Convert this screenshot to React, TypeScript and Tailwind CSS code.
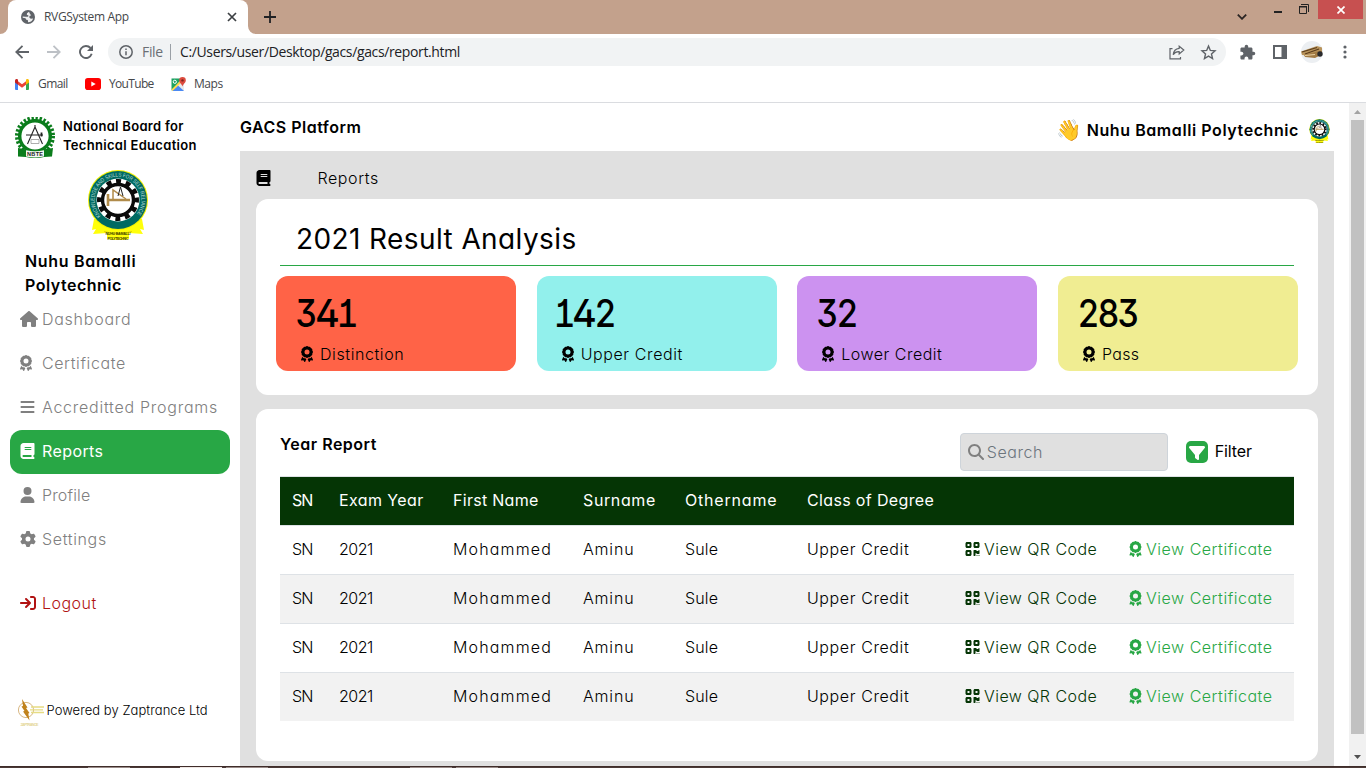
import type { ReactNode } from "react";
import {
  FaArrowRightToBracket,
  FaAward,
  FaBars,
  FaBook,
  FaFilter,
  FaGear,
  FaHouse,
  FaMagnifyingGlass,
  FaQrcode,
  FaUser,
} from "react-icons/fa6";
import { MdExtension } from "react-icons/md";

function TabIcon() {
  return (
    <svg viewBox="0 0 14 14" className="size-3.5">
      <circle cx="7" cy="7" r="7" fill="#5f6368" />
      <path d="M8 1.7 6 3.2l-.2 1.500 1.700.8-.4 1.300H4.300L1.700 6.500v1.300l2.800.500.8 1.500 1.500.3.3 2.100c2.500 0 4.500-1.500 5-3.700l-2.300.300-1.500-1.200.2-1.600 1.700-.8L9 4z" fill="#fff" opacity=".9" />
    </svg>
  );
}

function BrowserTabs() {
  return (
    <div className="flex h-[34px] shrink-0 bg-[#c3a18c] pl-2">
      <div className="relative flex w-60 items-center rounded-t-lg bg-white pl-[13px] pr-2.5">
        <svg viewBox="0 0 8 8" className="absolute -left-2 bottom-0 size-2"><path d="M8 0v8H0a8 8 0 0 0 8-8" fill="#fff" /></svg>
        <svg viewBox="0 0 8 8" className="absolute -right-2 bottom-0 size-2"><path d="M0 0v8h8a8 8 0 0 1-8-8" fill="#fff" /></svg>
        <TabIcon />
        <span className="ml-[9px] grow text-xs tracking-[-0.33px] text-[#45474a]">RVGSystem App</span>
        <svg viewBox="0 0 12 12" className="size-3" stroke="#3c4043" strokeWidth="1.7"><path d="m2 2 8 8M10 2l-8 8" /></svg>
      </div>
      <svg viewBox="0 0 12 12" className="ml-4 mt-[11px] size-3" stroke="#202124" strokeWidth="1.8"><path d="M6 0v12M0 6h12" /></svg>
      <svg viewBox="0 0 10 6" className="ml-auto mr-[23px] mt-3.5 h-1.5 w-2.5" fill="none" stroke="#2b2523" strokeWidth="1.8"><path d="m.8.600 4.200 4.200L9.200.600" /></svg>
      <div className="ml-1 mr-[17px] mt-[11px] h-0.5 w-2 bg-[#222]" />
      <svg viewBox="0 0 10 10" className="mr-[9px] mt-1 size-2.5" fill="none" stroke="#222"><path d="M.5 3h7v6.500h-7zM0 2.500h8M2 .500h7.500V8" /></svg>
      <div className="flex h-[19px] w-[45px] items-center justify-center bg-[#c75050]">
        <svg viewBox="0 0 8 8" className="size-2" stroke="#fff" strokeWidth="1.7"><path d="m.5.500 7 7M7.500.500l-7 7" /></svg>
      </div>
      <div className="w-[3px]" />
    </div>
  );
}

function Toolbar() {
  return (
    <div className="flex h-9 shrink-0 items-center bg-white pl-[15px] pr-[19px]">
      <svg viewBox="0 0 14 14" className="h-3.5 w-3.5" fill="none" stroke="#5f6368" strokeWidth="1.8"><path d="M14 7H1.500M7.500.800 1.300 7l6.200 6.200" /></svg>
      <svg viewBox="0 0 14 14" className="ml-[18px] h-3.5 w-3.5" fill="none" stroke="#bdc1c6" strokeWidth="1.8"><path d="M0 7h12.500M6.500.800 12.700 7l-6.200 6.200" /></svg>
      <svg viewBox="0 0 14 14" className="ml-[18px] h-3.5 w-3.5" fill="none" stroke="#5f6368" strokeWidth="1.9"><path d="M12.700 8.800A6 6 0 1 1 11.500 3" /><path d="M14 0v6H8z" fill="#5f6368" stroke="none" /></svg>
      <div className="ml-[15px] flex h-7 w-[1118px] items-center rounded-full bg-[#f1f3f4] pl-[11px] pr-[9px] text-sm">
        <svg viewBox="0 0 14 14" className="size-3.5" fill="none" stroke="#5f6368" strokeWidth="1.5"><circle cx="7" cy="7" r="6.200" /><path d="M7 6.200v4M7 3.400v1.600" /></svg>
        <span className="ml-[9px] w-[28px] tracking-[-0.33px] text-[#6b6f74]">File</span>
        <div className="mr-[9px] h-4 w-px bg-[#9aa0a6]" />
        <span className="grow tracking-[-0.37px] text-[#202124]">C:/Users/user/Desktop/gacs/gacs/report.html</span>
        <svg viewBox="0 0 16 15" className="mr-[15px] h-[15px] w-4" fill="none" stroke="#5f6368" strokeWidth="1.2"><path d="M3.500 3.600H1v10.300h10.500v-2" /><path d="M10.200 1.200 14.800 5l-4.600 3.900V6.700C7.300 6.500 5.500 7.700 4.200 9.800 4.500 6.300 6.500 3.700 10.200 3.300z" /></svg>
        <svg viewBox="0 0 24 24" className="size-[17px]" fill="none" stroke="#5f6368" strokeWidth="2"><path d="m12 3 2.600 6.100 6.600.600-5 4.400 1.500 6.500L12 17.200l-5.700 3.400 1.500-6.500-5-4.400 6.600-.600z" /></svg>
      </div>
      <MdExtension className="ml-[13px] size-[17px] text-[#5f6368]" />
      <svg viewBox="0 0 14 14" className="ml-[17px] size-3.5"><path d="M0 0h14v14H0z" fill="#5f6368" /><path d="M2 2h6.500v10H2z" fill="#fff" /></svg>
      <svg viewBox="0 0 22 22" className="ml-3.5 size-[22px]">
        <circle cx="11" cy="11" r="11" fill="#eceff2" />
        <path d="m0 10.500 16-5.500 5 1.500v3L7 14.500l-6-.500z" fill="#b8935a" /><path d="m1 11 15-4.500M4 13l14-5" stroke="#5a3c1c" strokeWidth="1.200" />
        <path d="m3 14 13-3.500 5-1v4L14 17l-10-1z" fill="#a27b44" /><path d="m4 14.500 10-1" stroke="#ead2a4" /><circle cx="19" cy="13" r="2.700" fill="#2a2a2c" />
      </svg>
      <svg viewBox="0 0 4 14" className="ml-auto h-3.5 w-1" fill="#5f6368"><circle cx="2" cy="2" r="1.600" /><circle cx="2" cy="7" r="1.600" /><circle cx="2" cy="12" r="1.600" /></svg>
    </div>
  );
}

function Bookmarks() {
  return (
    <div className="flex h-[33px] shrink-0 items-center border-b border-[#dadce0] bg-white pb-1 pl-[15px] text-xs text-[#45474a]">
      <svg viewBox="0 0 14 11" className="h-[11px] w-3.5">
        <path d="M0 1.500V10q0 1 1 1h2V4z" fill="#4285f4" /><path d="M14 1.500V10q0 1-1 1h-2V4z" fill="#34a853" />
        <path d="m3 2.200 4 3 4-3v3.600L7 8.800 3 5.800z" fill="#ea4335" /><path d="M0 1.800C0 0 1.800-.400 3 .600v5.200L0 3.500z" fill="#c5221f" /><path d="M14 1.800C14 0 12.200-.400 11 .600v5.200l3-2.300z" fill="#fbbc04" />
      </svg>
      <span className="ml-[9px] w-[47px] tracking-[-0.57px]">Gmail</span>
      <svg viewBox="0 0 16 12" className="h-3 w-4"><rect width="16" height="12" rx="2.800" fill="#f00" /><path d="m6.300 3.400 4.400 2.600-4.400 2.600z" fill="#fff" /></svg>
      <span className="ml-2 w-[62px] tracking-[-0.67px]">YouTube</span>
      <svg viewBox="0 0 15 15" className="h-[15px] w-[15px]">
        <path d="M1 1.500h12V14H1z" fill="#e8eaed" /><path d="M.500 1.500H11L2 12.500l-1.500 1z" fill="#1ea362" /><path d="m7 8.500 6 5.500H1z" fill="#4a89f3" /><path d="m.500 12.500 9-9 1.500 1.500-9.500 9z" fill="#ffd84c" />
        <circle cx="3.800" cy="4.800" r="1.600" fill="none" stroke="#fff" /><path d="M11.500 0a3.300 3.300 0 0 1 3.300 3.400c0 2.300-2.500 3.200-3.300 6.100-.800-2.900-3.300-3.800-3.300-6.100A3.300 3.300 0 0 1 11.500 0" fill="#dc4b3e" /><circle cx="11.500" cy="3.400" r="1.200" fill="#7e251c" />
      </svg>
      <span className="ml-2 tracking-[-0.44px]">Maps</span>
    </div>
  );
}

function Crest({ className }: { className: string }) {
  return (
    <svg viewBox="0 0 60 70" className={className}>
      <path d="M6 49 4 60l4-1-3 5 14-1v6q11 2.500 22 0v-6l14 1-3-5 4 1-2-11z" fill="#ffff0a" />
      <path d="M16 61.500q14 4 28 0" fill="none" stroke="#e0ce00" />
      <circle cx="30" cy="30" r="30" fill="#f4f000" />
      <circle cx="30" cy="30" r="29" fill="#006a62" />
      <circle cx="30" cy="30" r="21.500" fill="#fff" />
      <circle cx="30" cy="30" r="18.500" fill="none" stroke="#0a0a0a" strokeWidth="5" strokeDasharray="4.843 4.843" transform="rotate(-7.500 30 30)" />
      <circle cx="30" cy="30" r="15.500" fill="none" stroke="#0a0a0a" strokeWidth="3.400" />
      <path d="M20 24v12M20 30h22" fill="none" stroke="#b08b4a" strokeWidth="2.600" />
      <path d="M25 29v-9l13 9" fill="none" stroke="#b08b4a" strokeWidth="1.500" />
      <path d="m32.500 17-2.500 9M32.500 17l2.500 9" stroke="#222" strokeWidth="1" />
      <path id="crest-arc" d="M12.870 45.940A23.400 23.400 0 1 1 47.130 45.940" fill="none" />
      <text fontSize="5.600" fill="#b9d8d4" fontFamily="Liberation Sans, sans-serif">
        <textPath href="#crest-arc" textLength="105" lengthAdjust="spacingAndGlyphs">KNOWLEDGE AND SKILLS FOR SELF RELIANCE</textPath>
      </text>
      <g fontSize="3.600" fontWeight="700" fill="#444400" textAnchor="middle" fontFamily="Liberation Sans, sans-serif">
        <text x="30" y="65" textLength="25">NUHU BAMALLI</text>
        <text x="30" y="69.500" textLength="21">POLYTECHNIC</text>
      </g>
    </svg>
  );
}

function BoardLogo() {
  return (
    <svg viewBox="0 0 40 41" className="h-[41px] w-10">
      <circle cx="20" cy="19" r="17.800" fill="none" stroke="#0b7d1c" strokeWidth="4.400" strokeDasharray="2.300 1.694" />
      <circle cx="20" cy="19" r="15.300" fill="#fff" stroke="#0b7d1c" strokeWidth="3.400" />
      <g fill="none" stroke="#222" strokeWidth="1.100"><path d="M20 8v3M20 10l-7.500 17M20 10l7.500 17M11 18h17" /><path d="M16 22.500h8v4h-8z" stroke="#999" strokeWidth=".8" /><path d="M26.500 15.500v4" strokeWidth="1.800" /></g>
      <path d="m3 31 9 1.500q8 2 16 0L38 31l-1 8.500-8 .500q-9 2.500-18 0l-8-.500z" fill="#0b7d1c" />
      <path d="M11 33.200q9 2 18 0v6.300q-9 2-18 0z" fill="#f3f8f2" />
      <text x="20" y="39.200" fontSize="5.500" fontWeight="700" textAnchor="middle" textLength="16" fill="#222" fontFamily="Liberation Sans, sans-serif">NBTE</text>
    </svg>
  );
}

function ZaptranceLogo() {
  return (
    <svg viewBox="0 0 26 30" className="h-[30px] w-[26px]">
      <circle cx="8" cy="11" r="7.600" fill="none" stroke="#d8b884" strokeWidth="1" />
      <path d="m4 0 5.500 8.500-1.500.500 3.500 5-1.200.500 1.200 7-6.500-9 1.500-.500L3.500 7.500 5 7z" fill="#c0821c" />
      <path d="M13 8h13M12 10.800h13M13 13.500h13" stroke="#e6dc83" strokeWidth="1.300" />
      <text x="11.500" y="27" fontSize="4" fontWeight="700" textAnchor="middle" textLength="18" fill="#e5d79a" fontFamily="Liberation Sans, sans-serif">ZAPTRANCE</text>
    </svg>
  );
}

const nav: { label: string; icon: ReactNode; tone: string }[] = [
  { label: "Dashboard", icon: <FaHouse className="h-4 w-[18px]" />, tone: "tracking-[0.74px]" },
  { label: "Certificate", icon: <FaAward className="h-4 w-3" />, tone: "tracking-[0.6px]" },
  { label: "Accreditted Programs", icon: <FaBars className="h-4 w-[15px]" />, tone: "tracking-[0.74px]" },
  { label: "Reports", icon: <FaBook className="h-4 w-[15px]" />, tone: "tracking-[0.4px]" },
  { label: "Profile", icon: <FaUser className="h-4 w-[15px]" />, tone: "tracking-[0.15px]" },
  { label: "Settings", icon: <FaGear className="size-4" />, tone: "tracking-[0.65px]" },
];

function Sidebar() {
  return (
    <aside className="flex w-60 shrink-0 flex-col">
      <div className="flex h-[67px] pl-[15px] pt-3.5">
        <BoardLogo />
        <p className="ml-2 text-[13px] font-semibold leading-[19px] tracking-[0.3px] text-black">
          National Board for<br />Technical Education
        </p>
      </div>
      <Crest className="ml-[88px] h-[70px] w-[60px] shrink-0" />
      <p className="ml-[25px] mt-[9px] h-12 text-base font-semibold leading-6 text-black">
        <span className="tracking-[0.69px]">Nuhu Bamalli</span><br /><span className="tracking-[0.5px]">Polytechnic</span>
      </p>
      <nav className="flex flex-col px-2.5 text-base font-light text-[#808080]">
        {nav.map((n) => (
          <a
            key={n.label}
            className={
              n.label === "Reports"
                ? "-mb-px mt-px flex h-11 items-center rounded-xl bg-[#28a745] pb-0.5 pl-2.5 font-normal text-white"
                : "flex h-11 items-center pl-2.5"
            }
          >
            <span className="w-[22px]">{n.icon}</span>
            <span className={n.tone}>{n.label}</span>
          </a>
        ))}
        <a className="mt-5 flex h-11 items-center pl-2.5 text-[#b11212]">
          <span className="w-[22px]"><FaArrowRightToBracket className="h-4 w-4" /></span>
          <span className="tracking-[0.48px]">Logout</span>
        </a>
      </nav>
      <div className="ml-[18px] mt-[74px] flex items-start">
        <ZaptranceLogo />
        <span className="ml-[2.5px] mt-px text-[13px] font-light leading-5 tracking-[0.05px] text-black">Powered by Zaptrance Ltd</span>
      </div>
    </aside>
  );
}

const stats = [
  { value: "341", label: "Distinction", bg: "bg-[#ff6347]", track: "tracking-[0.59px]" },
  { value: "142", label: "Upper Credit", bg: "bg-[#92f0ec]", track: "tracking-[0.6px]" },
  { value: "32", label: "Lower Credit", bg: "bg-[#cc92f0]", track: "tracking-[0.5px]" },
  { value: "283", label: "Pass", bg: "bg-[#f0ed92]", track: "tracking-[0.35px]" },
];

function Digits({ value }: { value: string }) {
  return (
    <div className="flex h-7 text-[38.5px] font-medium leading-7 text-black [font-feature-settings:'cv02','cv09','cv01','ss01','ss02','tnum']">
      {value.split("").map((d, i) => (
        <span
          key={i}
          className={
            d === "1"
              ? "flex w-[16px] justify-center"
              : d === "4"
                ? "flex w-[23px] justify-center"
                : "flex w-5 justify-center"
          }
        >
          <span className={d === "4" ? "scale-x-[0.98]" : "scale-x-[0.88]"}>{d}</span>
        </span>
      ))}
    </div>
  );
}

const columns = [
  { label: "SN", track: "tracking-[-1px]" },
  { label: "Exam Year", track: "tracking-[0.4px]" },
  { label: "First Name", track: "tracking-[0.29px]" },
  { label: "Surname", track: "tracking-[0.62px]" },
  { label: "Othername", track: "tracking-[0.81px]" },
  { label: "Class of Degree", track: "tracking-[0.35px]" },
];

const rows = [0, 1, 2, 3];
const gridCols = "grid grid-cols-[47px_114px_130px_102px_122px_157px_164px_178px] items-center h-[49px] border-t border-[#dee2e6] pb-0.5 [&>*]:pl-3";

function YearTable() {
  return (
    <div className="text-base text-black">
      <div className={gridCols + " bg-[#053505] font-normal text-white"}>
        {columns.map((c) => <span key={c.label} className={c.track}>{c.label}</span>)}
      </div>
      {rows.map((r) => (
        <div key={r} className={gridCols + (r % 2 ? " bg-[#f2f2f2] font-light" : " bg-white font-light")}>
          <span className="tracking-[-0.8px]">SN</span>
          <span className="tracking-[-0.5px]">2021</span>
          <span className="tracking-[1.16px]">Mohammed</span>
          <span className="tracking-[0.82px]">Aminu</span>
          <span className="tracking-[0.13px]">Sule</span>
          <span className="tracking-[0.6px]">Upper Credit</span>
          <span className="flex items-center text-[#053505]">
            <FaQrcode className="ml-px mr-1 h-4 w-[15px]" />
            <span className="tracking-[0.45px]">View QR Code</span>
          </span>
          <span className="flex items-center text-[#28a745]">
            <FaAward className="ml-px mr-1 h-4 w-[13px]" />
            <span className="tracking-[0.52px]">View Certificate</span>
          </span>
        </div>
      ))}
    </div>
  );
}

function Main() {
  return (
    <main className="flex w-[1094px] shrink-0 flex-col">
      <header className="flex h-12 shrink-0 justify-between pr-1 text-base font-semibold text-black">
        <h1 className="pt-3 tracking-[0.49px]">GACS Platform</h1>
        <div className="flex items-center pt-1.5">
          <span className="mr-[7px] w-6 text-[20.5px] leading-6">👋</span>
          <span className="mr-2.5 tracking-[0.58px]">Nuhu Bamalli Polytechnic</span>
          <Crest className="mt-0.5 h-6 w-[21px]" />
        </div>
      </header>
      <div className="flex grow flex-col bg-[#e0e0e0] px-4 pb-[5px]">
        <div className="flex h-12 shrink-0 items-center pt-1.5 text-base font-light text-black">
          <FaBook className="h-4 w-[15px]" />
          <span className="ml-[46.500px] tracking-[0.58px]">Reports</span>
        </div>
        <section className="h-[196px] shrink-0 rounded-xl bg-white px-5">
          <h2 className="mx-1 flex h-[67px] items-center border-b border-[#28a745] pl-4 pt-3.5 text-[28px] tracking-[0.4px] text-black">2021 Result Analysis</h2>
          <div className="mt-2.5 flex justify-between">
            {stats.map((s) => (
              <div key={s.label} className={s.bg + " h-[95px] w-60 rounded-xl pl-5 pt-[23px]"}>
                <Digits value={s.value} />
                <div className="ml-[5px] mt-[15px] flex items-center text-base font-light text-black">
                  <FaAward className="mr-[7px] h-4 w-3" />
                  <span className={s.track}>{s.label}</span>
                </div>
              </div>
            ))}
          </div>
        </section>
        <section className="mt-3.5 h-[352px] shrink-0 rounded-xl bg-white px-6">
          <div className="flex h-[67px]">
            <h3 className="grow pt-[23px] text-base font-semibold tracking-[0.5px] text-black">Year Report</h3>
            <div className="mt-6 flex h-[38px] w-52 items-center rounded border border-[#ced4da] bg-[#e0e0e0] pl-[7px] text-base font-light">
              <FaMagnifyingGlass className="mr-[3px] size-4 text-[#808080]" />
              <span className="tracking-[0.57px] text-[#6c757d]">Search</span>
            </div>
            <div className="ml-[18px] mr-[42px] mt-8 flex h-[22px] items-center">
              <span className="flex size-[22px] items-center justify-center rounded-[5px] bg-[#28a745] text-white"><FaFilter className="mt-px size-4" /></span>
              <span className="-mt-0.5 ml-[7px] text-base tracking-[-0.1px] text-black">Filter</span>
            </div>
          </div>
          <YearTable />
        </section>
      </div>
    </main>
  );
}

function Scrollbar() {
  return (
    <div className="ml-auto flex w-[17px] flex-col items-center bg-[#f1f1f1]">
      <svg viewBox="0 0 7 4" className="mb-1.5 mt-[7px] h-1 w-[7px]" fill="#a3a3a3"><path d="M3.500 0 7 4H0z" /></svg>
      <div className="h-[614px] w-[13px] bg-[#c1c1c1]" />
      <svg viewBox="0 0 7 4" className="mt-[21px] h-1 w-[7px]" fill="#505050"><path d="M3.500 4 7 0H0z" /></svg>
    </div>
  );
}

export default function App() {
  return (
    <div className="flex h-[768px] w-[1366px] flex-col overflow-hidden bg-white">
      <div className="flex flex-col font-['Open_Sans',sans-serif]">
        <BrowserTabs />
        <Toolbar />
        <Bookmarks />
      </div>
      <div className="flex h-[663px] shrink-0 overflow-hidden font-[Inter,sans-serif] [font-feature-settings:'cv11']">
        <Sidebar />
        <Main />
        <Scrollbar />
      </div>
      <div className="flex h-0.5 shrink-0 border-t border-[#3f2d2a] bg-[#4b3a37]">
        <div className="ml-[88px] w-[42px] bg-[#9a8c89]" />
        <div className="ml-[50px] w-[42px] bg-[#efe7e4]" />
        <div className="ml-1 w-[42px] bg-[#9a8c89]" />
        <div className="ml-[142px] w-[42px] bg-[#9a8c89]" />
        <div className="ml-1 w-[42px] bg-[#9a8c89]" />
      </div>
    </div>
  );
}
